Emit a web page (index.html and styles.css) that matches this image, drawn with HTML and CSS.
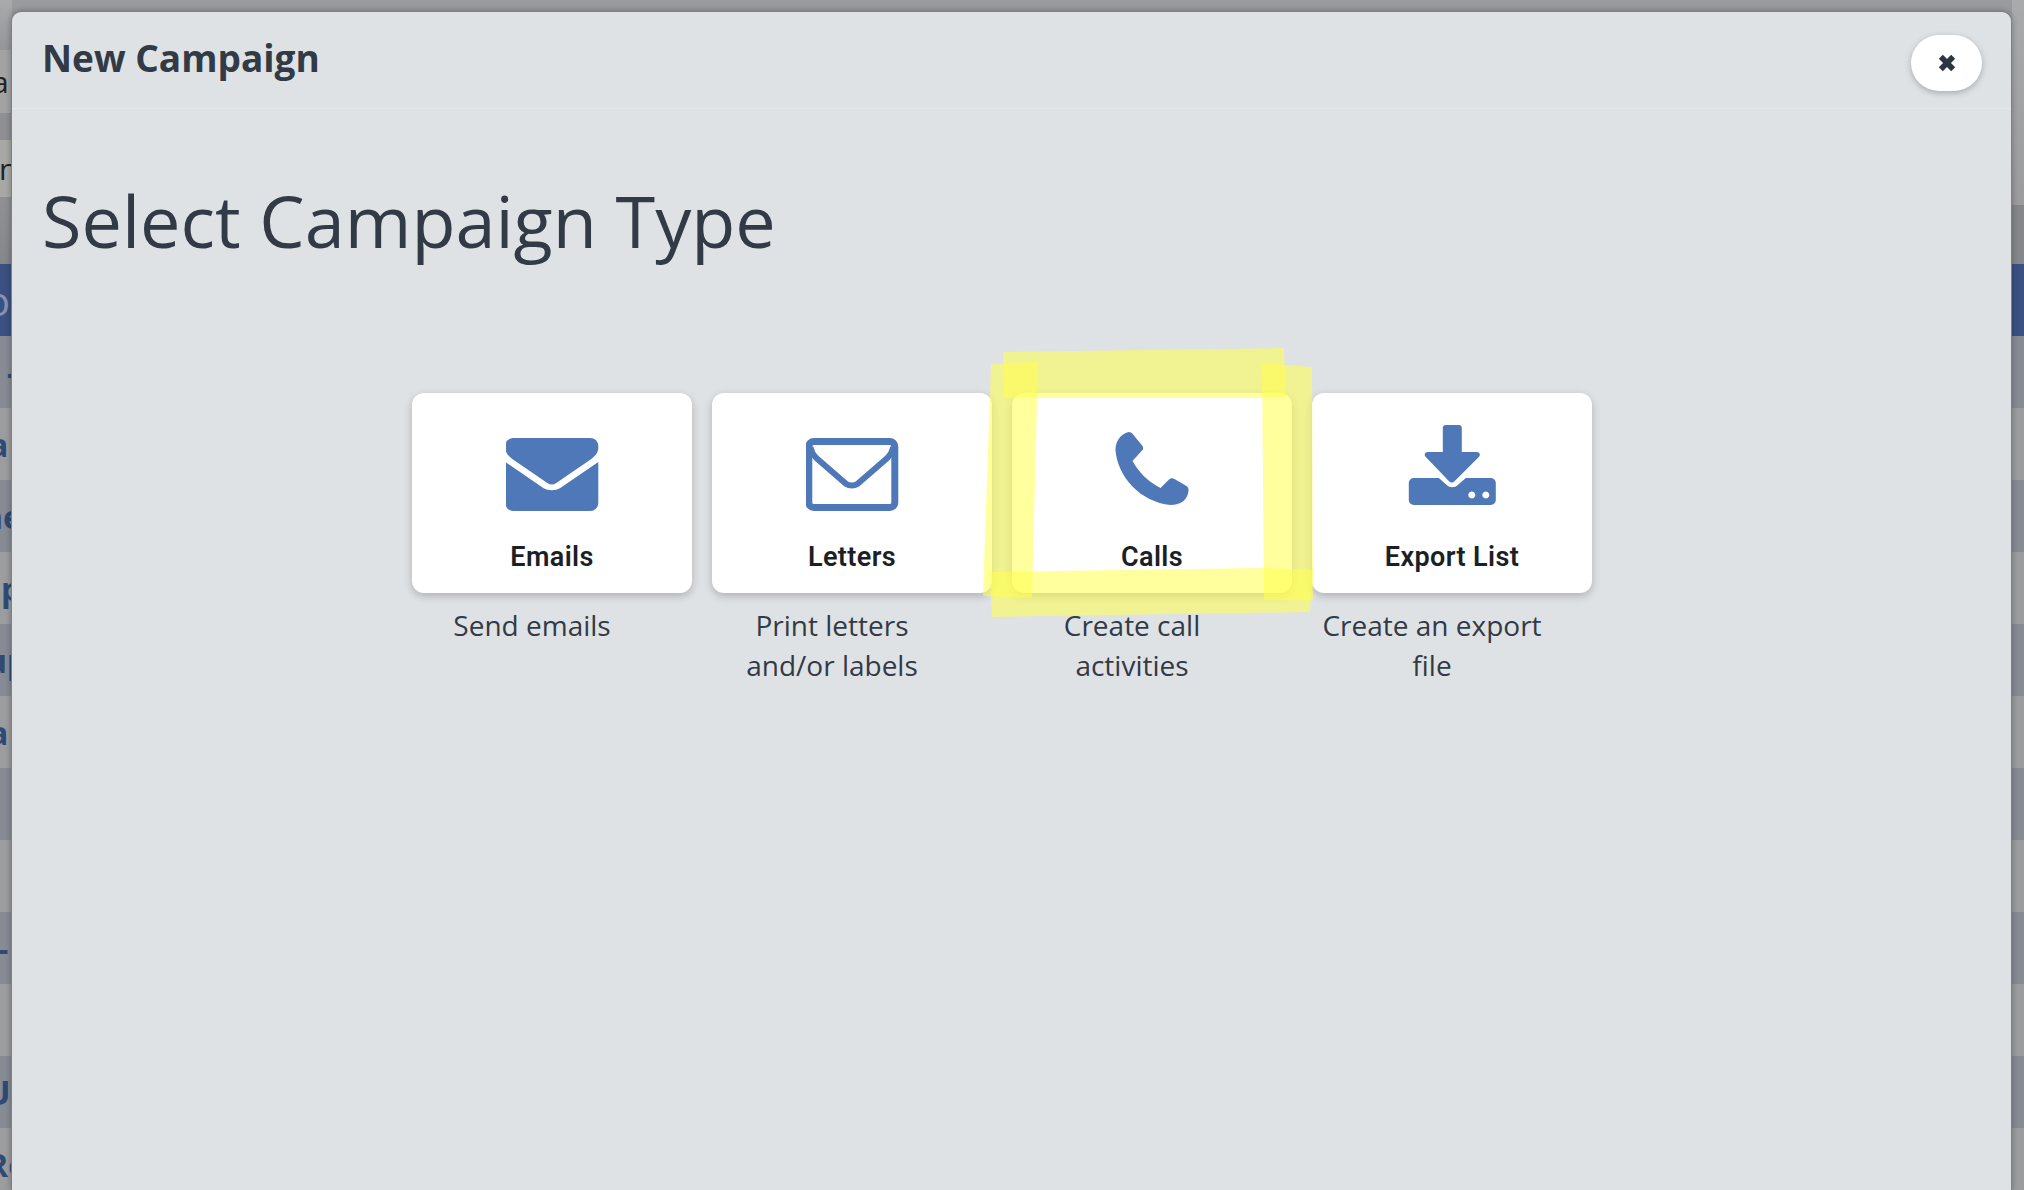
FILE: index.html
```html
<!DOCTYPE html>
<html lang="en">
<head>
<meta charset="utf-8">
<title>New Campaign</title>
<link rel="stylesheet" href="styles.css">
</head>
<body>
<div class="page">
  <div class="top">
    <div class="top-left">
      <div class="tl-a"></div>
      <div class="tl-row tl-row-1"><span class="frag-a">a</span></div>
      <div class="tl-b"></div>
      <div class="tl-row tl-row-2"><span class="frag-n">n</span></div>
      <div class="tl-c"></div>
    </div>
    <div class="top-right">
      <div class="tr-a"></div>
      <div class="tr-b"></div>
    </div>
  </div>
  <div class="banner"><span>o</span></div>
  <div class="row dark"><span class="off-dash1">-</span></div>
  <div class="row light"><span class="off-a">a</span></div>
  <div class="row dark"><span class="off-ne">ne</span></div>
  <div class="row light"><span class="off-p">p</span></div>
  <div class="row dark"><span class="off-up">up</span></div>
  <div class="row light"><span class="off-a">a</span></div>
  <div class="row dark"></div>
  <div class="row light"></div>
  <div class="row dark"><span class="off-dash2">-</span></div>
  <div class="row light"></div>
  <div class="row dark"><span class="off-u">U</span></div>
  <div class="row light"><span class="off-re">Re</span></div>
</div>

<div class="modal">
  <header class="modal-head">
    <h2 class="modal-title">New Campaign</h2>
    <button class="close" type="button" aria-label="Close">
      <svg class="close-icon" viewBox="0 0 16 16"><path d="M2.500 2.500 13.500 13.500M13.500 2.500 2.500 13.500"/></svg>
    </button>
  </header>
  <div class="modal-body">
    <h1 class="heading">Select Campaign Type</h1>
    <div class="types">
      <div class="type">
        <div class="card">
          <svg class="icon" width="93" height="86" viewBox="0.7 -13 93 86"><path d="M8 0H85a8 8 0 0 1 8 8V10c0 4-3 8-7 11L51 45c-3 2-6 2-9 0L7 21C3 18 0 14 0 10V8A8 8 0 0 1 8 0Z"/><path d="M0 24 38 50c5 3 12 3 17 0L93 24V65a8 8 0 0 1-8 8H8a8 8 0 0 1-8-8Z"/></svg>
          <div class="card-label">Emails</div>
        </div>
        <p class="desc">Send emails</p>
      </div>
      <div class="type">
        <div class="card">
          <svg class="icon" width="93" height="86" viewBox="0.7 -13 93 86"><rect class="line" x="3.500" y="3.500" width="86" height="66" rx="5"/><path class="line-thin" d="M5 9C6 14 8 17 11 20L41 46c3 2 8 2 11 0L82 20c3-3 5-6 6-11"/></svg>
          <div class="card-label">Letters</div>
        </div>
        <p class="desc">Print letters and/or labels</p>
      </div>
      <div class="type">
        <div class="card">
          <svg class="icon" width="93" height="86" viewBox="-9.500 -7 93 86"><path d="M13 0C15 0 17 1 18 3L27 14C28 16 28 18 26 19L17 29C23 40 33 50 45 56L53 48C55 46 57 46 59 47L71 54C73 55 73 57 73 59 72 68 65 73 55 73 25 70 2 45 0 18 0 9 5 2 13 0Z"/></svg>
          <div class="card-label">Calls</div>
        </div>
        <p class="desc">Create call activities</p>
      </div>
      <div class="type">
        <div class="card">
          <svg class="icon" width="93" height="86" viewBox="-2.800 0 93 86"><path d="M37 0H50a3 3 0 0 1 3 3V27H68C71 27 72 30 70 32L46 56C44 58 42 58 40 56L17 32C15 30 16 27 19 27H34V3a3 3 0 0 1 3-3Z"/><path fill-rule="evenodd" d="M5 53H30L38 60C41 63 46 63 49 60L57 53H82a5 5 0 0 1 5 5V75a5 5 0 0 1-5 5H5a5 5 0 0 1-5-5V58a5 5 0 0 1 5-5ZM63 66.500a3.500 3.500 0 1 0 .01 0ZM77 66.500a3.500 3.500 0 1 0 .01 0Z"/></svg>
          <div class="card-label">Export List</div>
        </div>
        <p class="desc">Create an export file</p>
      </div>
    </div>
  </div>
</div>

<svg class="marker" width="2024" height="1190" viewBox="0 0 2024 1190" aria-hidden="true">
  <polygon points="1003,352 1284,348 1286,398 1004,398"/>
  <polygon points="991,364 1038,362 1032,598 983,596"/>
  <polygon points="1262,363 1312,367 1313,600 1264,600"/>
  <polygon points="990,572 1262,568 1313,570 1310,612 992,617"/>
</svg>
</body>
</html>
```
FILE: styles.css
```css
* { box-sizing: border-box; }
html, body { margin: 0; height: 100%; }
body {
  position: relative;
  width: 2024px;
  height: 1190px;
  overflow: hidden;
  font-family: "Open Sans", sans-serif;
  background: #9a9b9e;
}

/* dimmed page behind the modal */
.page { display: flex; flex-direction: column; height: 1190px; font-weight: 700; color: #2f4a74; font-size: 32px; }
.top { display: flex; flex: none; justify-content: space-between; height: 264px; }
.top-left, .top-right { width: 12px; display: flex; flex-direction: column; }
.tl-a { height: 50px; background: linear-gradient(#a8aaac, #94969a); }
.tl-row { flex: none; height: 63px; background: #a3a3a3; color: #222; font-weight: 400; font-size: 30px; display: flex; align-items: center; white-space: nowrap; }
.tl-row-2 { height: 57px; background: #a8a8a7; }
.tl-b { height: 27px; background: #8f9093; }
.tl-c { flex: 1; background: linear-gradient(#8f9194, #85878b); }
.frag-a { margin-left: -8px; }
.frag-n { margin-left: -1px; }
.tr-a { height: 205px; background: linear-gradient(#a8aaac, #9c9c9e); }
.tr-b { flex: 1; background: #85878a; }
.banner { flex: none; height: 72px; background: #3a5181; color: #8494b2; display: flex; align-items: center; font-size: 40px; font-weight: 400; }
.banner span { margin-left: -14px; }
.row { flex: none; height: 72px; display: flex; align-items: center; white-space: nowrap; }
.off-dash1 { margin-left: 7px; }
.off-dash2 { margin-left: -2px; }
.off-a { margin-left: -11px; }
.off-ne { margin-left: -18px; }
.off-p { margin-left: 1px; }
.off-up { margin-left: -14px; }
.off-u { margin-left: -15px; font-size: 34px; }
.off-re { margin-left: -13px; }
.dark { background: #878c94; }
.light { background: #9c9d9f; }

/* modal */
.modal {
  position: absolute;
  left: 11px;
  top: 11px;
  width: 2001px;
  height: 1179px;
  background: #dfe2e5;
  border: 1px solid #7d8086;
  border-bottom: 0;
  border-radius: 10px 10px 0 0;
  box-shadow: 0 0 6px rgba(0, 0, 0, .3);
  color: #323a46;
}
.modal-head {
  display: flex;
  justify-content: space-between;
  align-items: flex-start;
  height: 97px;
  padding: 23px 29px 0 30px;
  border-bottom: 1px solid #e6e8eb;
}
.modal-title { margin: 0; font-size: 37px; line-height: 46px; font-weight: 700; }
.close {
  width: 71px;
  height: 56px;
  padding: 0;
  border: 0;
  border-radius: 28px;
  background: #fff;
  box-shadow: 0 2px 6px rgba(0, 0, 0, .25);
  display: flex;
  align-items: center;
  justify-content: center;
}
.close-icon { width: 18px; height: 18px; fill: none; stroke: #2c3542; stroke-width: 5; }

.modal-body { padding: 62px 0 0 30px; }
.heading { margin: 0; font-size: 72px; line-height: 98px; font-weight: 400; }
.types { display: flex; gap: 20px; margin: 124px 0 0 370px; }
.type { width: 280px; }
.card {
  height: 200px;
  background: #fff;
  border-radius: 12px;
  box-shadow: 0 3px 8px rgba(0, 0, 0, .22);
  display: flex;
  flex-direction: column;
  align-items: center;
  padding-top: 32px;
}
.icon { display: block; flex: none; fill: #4f78b8; }
.line { fill: none; stroke: #4f78b8; stroke-width: 7; }
.line-thin { fill: none; stroke: #4f78b8; stroke-width: 6; }
.card-label { margin-top: 28px; font-family: Roboto, sans-serif; font-weight: 600; font-size: 27px; line-height: 36px; letter-spacing: .4px; color: #1c1f26; }
.desc { margin: 12px 0 0; width: 240px; text-align: center; font-size: 28px; line-height: 40px; color: #323a46; }

/* highlighter marks over the Calls card */
.marker { position: absolute; left: 0; top: 0; pointer-events: none; }
.marker polygon { fill: #ffff4c; fill-opacity: .55; }
```
